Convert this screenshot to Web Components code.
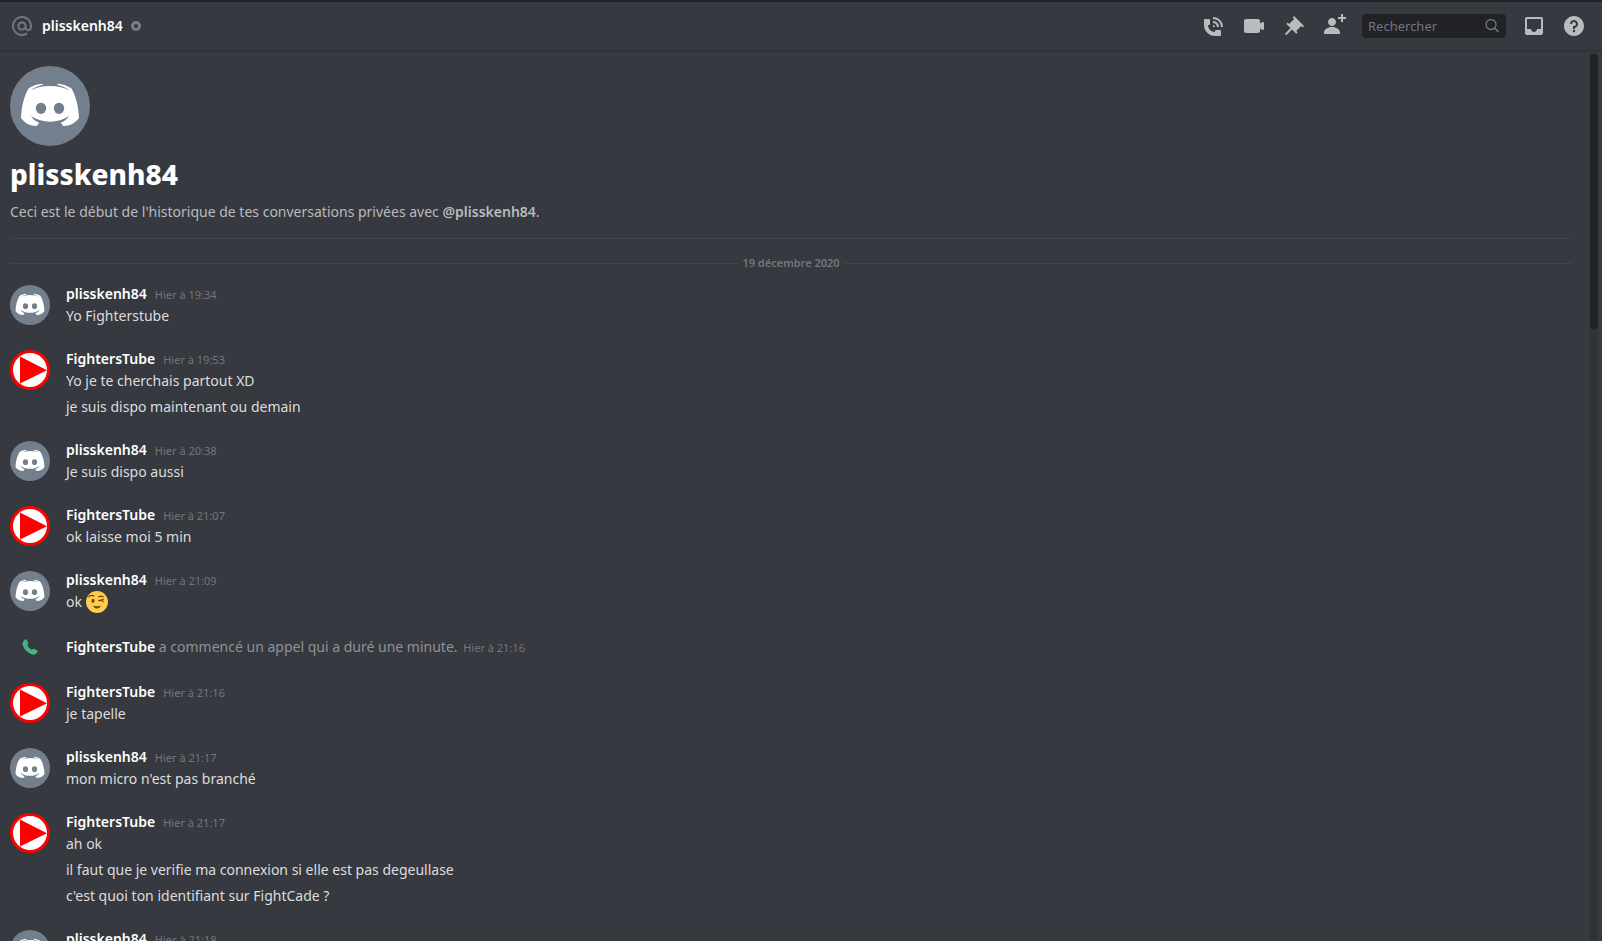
<!DOCTYPE html>
<html lang="fr">
<head>
<meta charset="utf-8">
<meta name="viewport" content="width=device-width, initial-scale=1">
<title>plisskenh84</title>
<style>
  :root {
    --bg: #36393f;
    --bg-dark: #202225;
    --text: #dcddde;
    --muted: #72767d;
    --icon: #b9bbbe;
    --grey: #747f8d;
    --line: #42454a;
  }
  body {
    margin: 0;
    background: var(--bg);
    color: var(--text);
    font: 14px/22px "Noto Sans", "Open Sans", sans-serif;
  }
</style>
</head>
<body>
<chat-app>
  <chat-header slot="header" name="plisskenh84"></chat-header>

  <chat-welcome name="plisskenh84">Ceci est le début de l'historique de tes conversations privées avec <strong>@plisskenh84</strong>.</chat-welcome>
  <date-divider>19 décembre 2020</date-divider>

  <chat-message author="plisskenh84" time="Hier à 19:34"><p>Yo Fighterstube</p></chat-message>
  <chat-message author="FightersTube" time="Hier à 19:53"><p>Yo je te cherchais partout XD</p><p>je suis dispo maintenant ou demain</p></chat-message>
  <chat-message author="plisskenh84" time="Hier à 20:38"><p>Je suis dispo aussi</p></chat-message>
  <chat-message author="FightersTube" time="Hier à 21:07"><p>ok laisse moi 5 min</p></chat-message>
  <chat-message author="plisskenh84" time="Hier à 21:09"><p>ok <wink-emoji></wink-emoji></p></chat-message>
  <call-message author="FightersTube" time="Hier à 21:16">a commencé un appel qui a duré une minute.</call-message>
  <chat-message author="FightersTube" time="Hier à 21:16"><p>je tapelle</p></chat-message>
  <chat-message author="plisskenh84" time="Hier à 21:17"><p>mon micro n'est pas branché</p></chat-message>
  <chat-message author="FightersTube" time="Hier à 21:17"><p>ah ok</p><p>il faut que je verifie ma connexion si elle est pas degeullase</p><p>c'est quoi ton identifiant sur FightCade ?</p></chat-message>
  <chat-message author="plisskenh84" time="Hier à 21:18"></chat-message>
</chat-app>

<script>
(function () {
  const ICONS = {
    at: 'M12 2C6.486 2 2 6.486 2 12C2 17.515 6.486 22 12 22C14.039 22 15.993 21.398 17.652 20.259L16.521 18.611C15.195 19.519 13.633 20 12 20C7.589 20 4 16.411 4 12C4 7.589 7.589 4 12 4C16.411 4 20 7.589 20 12V12.782C20 14.17 19.402 15 18.4 15L18.398 15.018C18.338 15.005 18.273 15 18.209 15H18C17.437 15 16.6 14.182 16.6 13.631V12C16.6 9.464 14.537 7.4 12 7.4C9.463 7.4 7.4 9.463 7.4 12C7.4 14.537 9.463 16.6 12 16.6C13.234 16.6 14.35 16.106 15.177 15.313C15.826 16.269 16.93 17 18 17L18.002 16.981C18.064 16.994 18.129 17 18.195 17H18.4C20.552 17 22 15.306 22 12.782V12C22 6.486 17.514 2 12 2ZM12 14.599C10.566 14.599 9.4 13.433 9.4 11.999C9.4 10.565 10.566 9.399 12 9.399C13.434 9.399 14.6 10.565 14.6 11.999C14.6 13.433 13.434 14.599 12 14.599Z',
    call: 'M11 5V3C16.515 3 21 7.486 21 13H19C19 8.589 15.411 5 11 5ZM17 13H15C15 10.795 13.206 9 11 9V7C14.309 7 17 9.692 17 13ZM11 11V13H13C13 11.896 12.105 11 11 11ZM14 16H18C18.553 16 19 16.447 19 17V21C19 21.553 18.553 22 18 22H13C6.925 22 2 17.075 2 11V6C2 5.447 2.448 5 3 5H7C7.553 5 8 5.447 8 6V10C8 10.553 7.553 11 7 11H6C6.063 14.938 9 18 13 18V17C13 16.447 13.447 16 14 16Z',
    video: 'M21.526 8.149C21.231 7.966 20.862 7.951 20.553 8.105L18 9.382V7C18 5.897 17.103 5 16 5H4C2.897 5 2 5.897 2 7V17C2 18.104 2.897 19 4 19H16C17.103 19 18 18.104 18 17V14.618L20.553 15.894C20.694 15.965 20.847 16 21 16C21.183 16 21.365 15.949 21.526 15.851C21.82 15.668 22 15.347 22 15V9C22 8.653 21.82 8.332 21.526 8.149Z',
    pin: 'M22 12L12.101 2.101L10.686 3.514L12.101 4.929L7.151 9.878V9.88L5.736 8.465L4.322 9.88L8.565 14.122L2.908 19.778L4.322 21.192L9.979 15.536L14.222 19.778L15.636 18.364L14.222 16.95L19.171 12H19.172L20.586 13.414L22 12Z',
    addFriend: 'M21 3H24V5H21V8H19V5H16V3H19V0H21V3ZM10 12C12.205 12 14 10.205 14 8C14 5.795 12.205 4 10 4C7.795 4 6 5.795 6 8C6 10.205 7.795 12 10 12ZM10 13C5.289 13 2 15.467 2 19V20H18V19C18 15.467 14.711 13 10 13Z',
    inbox: 'M19 3H4.99C3.88 3 3.01 3.89 3.01 5L3 19C3 20.1 3.88 21 4.99 21H19C20.1 21 21 20.1 21 19V5C21 3.89 20.1 3 19 3ZM19 15H15C15 16.66 13.65 18 12 18C10.35 18 9 16.66 9 15H4.99V5H19V15Z',
    help: 'M12 2C6.486 2 2 6.487 2 12C2 17.515 6.486 22 12 22C17.514 22 22 17.515 22 12C22 6.487 17.514 2 12 2ZM12 18.25C11.31 18.25 10.75 17.691 10.75 17C10.75 16.31 11.31 15.75 12 15.75C12.69 15.75 13.25 16.31 13.25 17C13.25 17.691 12.69 18.25 12 18.25ZM13 13.875V15H11V12H12C13.104 12 14 11.103 14 10C14 8.896 13.104 8 12 8C10.896 8 10 8.896 10 10H8C8 7.795 9.795 6 12 6C14.205 6 16 7.795 16 10C16 11.861 14.723 13.429 13 13.875Z'
  };

  // Everything is attribute driven, so one render on connect is enough
  class BaseElement extends HTMLElement {
    connectedCallback() {
      const shadow = this.shadowRoot || this.attachShadow({ mode: 'open' });
      shadow.innerHTML = this.render();
    }
    attr(name) { return _esc(this.getAttribute(name) ?? ''); }
  }

  class ChatApp extends BaseElement {
    render() {
      return `
        <style>
          :host { display: flex; flex-direction: column; height: 100vh; overflow: hidden; border-top: 2px solid var(--bg-dark); box-sizing: border-box; }
          .body { flex: 1; min-height: 0; display: flex; padding-right: 4px; }
          main { flex: 1; min-width: 0; overflow: hidden; padding: 16px 0 0 10px; }
          .track { width: 8px; margin-top: 4px; border-radius: 4px; background: #2e3338; }
          .thumb { height: 31%; border-radius: 4px; background: var(--bg-dark); }
        </style>
        <slot name="header"></slot>
        <div class="body">
          <main><slot></slot></main>
          <div class="track"><div class="thumb"></div></div>
        </div>
      `;
    }
  }

  class ChatHeader extends BaseElement {
    render() {
      return `
        <style>
          :host { display: block; }
          header {
            display: flex;
            align-items: center;
            justify-content: space-between;
            height: 48px;
            padding: 0 16px 0 10px;
            box-shadow: 0 1px 0 #2e3136, 0 2px 0 #33363b;
          }
          .title, .tools { display: flex; align-items: center; gap: 8px; }
          .tools { gap: 16px; }
          h2 { margin: 0; font-size: 14px; font-weight: 600; line-height: 22px; color: #fff; }
          .status { width: 10px; height: 10px; box-sizing: border-box; border: 3px solid var(--grey); border-radius: 50%; }
          button { display: block; padding: 0; border: 0; background: none; color: var(--icon); cursor: pointer; }
          svg { display: block; fill: currentColor; }
          .title svg { color: var(--muted); }
          .search {
            display: flex;
            align-items: center;
            width: 144px;
            height: 24px;
            padding: 0 6px;
            box-sizing: border-box;
            border-radius: 4px;
            background: var(--bg-dark);
            color: var(--muted);
          }
          input { flex: 1; min-width: 0; padding: 0; border: 0; outline: 0; background: none; color: var(--text); font: inherit; font-size: 13px; line-height: 20px; }
          input::placeholder { color: var(--muted); opacity: 1; }
        </style>
        <header>
          <div class="title">
            ${_icon('at')}
            <h2>${this.attr('name')}</h2>
            <span class="status" role="img" aria-label="Hors ligne"></span>
          </div>
          <div class="tools">
            <button type="button" aria-label="Appel vocal">${_icon('call')}</button>
            <button type="button" aria-label="Appel vidéo">${_icon('video')}</button>
            <button type="button" aria-label="Messages épinglés">${_icon('pin')}</button>
            <button type="button" aria-label="Ajouter des amis">${_icon('addFriend')}</button>
            <div class="search">
              <input type="text" placeholder="Rechercher" aria-label="Rechercher">
              <svg width="16" height="16" viewBox="0 0 16 16" aria-hidden="true">
                <g fill="none" stroke="currentColor"><circle cx="7" cy="6.500" r="5" stroke-width="1.3"/><path d="M10.600 10.100L14.500 14" stroke-width="1.6"/></g>
              </svg>
            </div>
            <button type="button" aria-label="Boîte de réception">${_icon('inbox')}</button>
            <button type="button" aria-label="Aide">${_icon('help')}</button>
          </div>
        </header>
      `;
    }
  }

  class UserAvatar extends BaseElement {
    render() {
      const art = this.getAttribute('user') === 'FightersTube'
        ? `<circle cx="40" cy="40" r="40" fill="#f00"/>
           <circle cx="40" cy="40" r="34" fill="#fff"/>
           <path d="M20 13V67L74 40.500Z" fill="#f00"/>`
        : `<circle cx="40" cy="40" r="40" fill="#747f8d"/>
           <path fill="#fff" d="M18.700 22.300C23 19.500 28 18 32 17.700L33 18.800C28 20 24 21.800 20.500 24.400C26 21.500 33 20 40 20C47 20 54 21.500 59.500 24.400C56 21.800 52 20 47 18.800L48 17.700C52 18 57 19.500 61.300 22.300C66 30 68.500 41 69 52C65.500 57 60 60 53.300 60L50.700 56.700C54 55.500 57 53.500 59 50C53 54 47 55.700 40 55.700C33 55.700 27 54 21 50C23 53.500 26 55.500 29.300 56.700L26.700 60C20 60 14.500 57 11 52C11.500 41 14 30 18.700 22.300Z"/>
           <ellipse cx="31" cy="42.300" rx="5.200" ry="5.600" fill="#747f8d"/>
           <ellipse cx="49" cy="42.300" rx="5.200" ry="5.600" fill="#747f8d"/>`;
      return `
        <style>
          :host { display: block; width: 40px; height: 40px; }
          :host([large]) { width: 80px; height: 80px; }
          svg { display: block; width: 100%; height: 100%; }
        </style>
        <svg viewBox="0 0 80 80" aria-hidden="true">${art}</svg>
      `;
    }
  }

  class ChatWelcome extends BaseElement {
    render() {
      return `
        <style>
          :host { display: block; margin-right: 20px; padding-bottom: 16px; border-bottom: 1px solid var(--line); }
          h1 { margin: 8px 0; font-size: 28px; font-weight: 800; line-height: 40px; color: #fff; }
          p { margin: 0; line-height: 20px; color: var(--icon); }
          ::slotted(strong) { font-weight: 600; }
        </style>
        <user-avatar user="${this.attr('name')}" large></user-avatar>
        <h1>${this.attr('name')}</h1>
        <p><slot></slot></p>
      `;
    }
  }

  class DateDivider extends BaseElement {
    render() {
      return `
        <style>
          :host { display: flex; align-items: center; gap: 4px; margin: 17px 18px 11px 0; color: var(--muted); font-size: 11px; font-weight: 600; line-height: 14px; }
          :host::before, :host::after { content: ""; flex: 1; height: 1px; background: var(--line); }
        </style>
        <span><slot></slot></span>
      `;
    }
  }

  class ChatMessage extends BaseElement {
    render() {
      return `
        <style>
          :host { display: flex; gap: 16px; padding: 2px 0; margin-bottom: 17px; }
          user-avatar { flex-shrink: 0; margin-top: 2px; }
          h3 { display: flex; align-items: baseline; gap: 8px; margin: 0; font-size: 14px; font-weight: 600; line-height: 22px; color: #fff; }
          time { font-size: 11px; font-weight: 400; line-height: 14px; color: var(--muted); }
          .text { display: flex; flex-direction: column; gap: 4px; }
          ::slotted(p) { margin: 0; }
        </style>
        <user-avatar user="${this.attr('author')}"></user-avatar>
        <div>
          <h3><span>${this.attr('author')}</span><time>${this.attr('time')}</time></h3>
          <div class="text"><slot></slot></div>
        </div>
      `;
    }
  }

  class CallMessage extends BaseElement {
    render() {
      return `
        <style>
          :host { display: flex; align-items: center; gap: 16px; padding: 4px 0; margin-bottom: 17px; color: #8e9297; }
          .icon { display: flex; justify-content: center; width: 40px; }
          svg { display: block; fill: #43b581; }
          strong { font-weight: 600; color: #fff; }
          time { margin-left: 2px; font-size: 11px; line-height: 14px; color: var(--muted); }
        </style>
        <span class="icon">
          <svg width="16" height="16" viewBox="0 0 16 16" aria-hidden="true"><path d="M1 3L3 .6Q4 0 4.600 .6L6.300 4Q6.500 5 5.300 6.300Q6.800 9.300 9.700 10.800Q11 9.500 12 9.700L15.400 11.400Q16 12 15.600 13L13.500 15.300Q12.500 16 10.500 15.600C5 14 1 9 .5 5Q.4 3.800 1 3Z"/></svg>
        </span>
        <span><strong>${this.attr('author')}</strong> <slot></slot> <time>${this.attr('time')}</time></span>
      `;
    }
  }

  class WinkEmoji extends BaseElement {
    render() {
      return `
        <style>
          :host { display: inline-block; width: 22px; height: 22px; vertical-align: bottom; }
          svg { display: block; }
        </style>
        <svg width="22" height="22" viewBox="0 0 36 36" role="img" aria-label="Clin d'œil">
          <circle cx="18" cy="18" r="18" fill="#ffcc4d"/>
          <ellipse cx="11.500" cy="16" rx="2.500" ry="3.500" fill="#664500"/>
          <g fill="none" stroke="#664500" stroke-width="1.8" stroke-linecap="round" stroke-linejoin="round">
            <path d="M4.500 9.500C6 7.500 9 6.500 13 8"/>
            <path d="M21 9.500C23 8 25.500 8 28 9.500"/>
            <path d="M28.500 13.500L20.500 16C23.500 15.300 26.500 15.500 28.500 17.500"/>
          </g>
          <path d="M12.500 24C16 25.500 20 25.500 23.500 24C24 24 24 24.500 23.800 25C22.500 27.500 20.500 28.500 18 28.500C15.500 28.500 13.500 27.500 12.200 25C12 24.500 12 24 12.500 24Z" fill="#664500"/>
        </svg>
      `;
    }
  }

  function _icon(name) {
    return `<svg width="24" height="24" viewBox="0 0 24 24" aria-hidden="true"><path fill-rule="evenodd" clip-rule="evenodd" d="${ICONS[name]}"/></svg>`;
  }

  function _esc(str) {
    return String(str)
      .replace(/&/g, '&amp;').replace(/</g, '&lt;')
      .replace(/>/g, '&gt;').replace(/"/g, '&quot;');
  }

  customElements.define('chat-app', ChatApp);
  customElements.define('chat-header', ChatHeader);
  customElements.define('user-avatar', UserAvatar);
  customElements.define('chat-welcome', ChatWelcome);
  customElements.define('date-divider', DateDivider);
  customElements.define('chat-message', ChatMessage);
  customElements.define('call-message', CallMessage);
  customElements.define('wink-emoji', WinkEmoji);
})();
</script>
</body>
</html>
